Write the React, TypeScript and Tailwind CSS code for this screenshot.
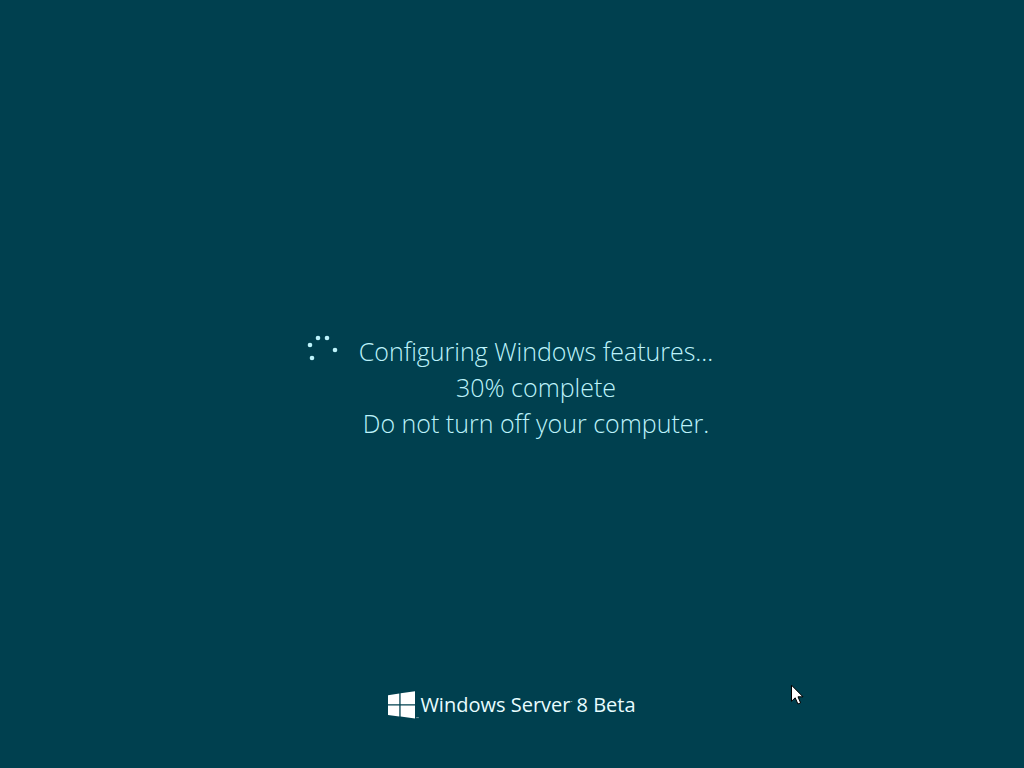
const DOTS = [
  { cx: 5, cy: 23 },
  { cx: 3, cy: 10 },
  { cx: 11, cy: 3 },
  { cx: 20, cy: 3 },
  { cx: 28, cy: 15 },
];

function Spinner() {
  return (
    <svg className="mt-0.5 h-8 w-8 shrink-0" viewBox="0 0 32 32" role="img" aria-label="Working">
      {DOTS.map((dot) => (
        <circle key={`${dot.cx}-${dot.cy}`} cx={dot.cx} cy={dot.cy} r="2.3" fill="#bdf3fb" />
      ))}
    </svg>
  );
}

function WindowsFlag() {
  return (
    <svg className="h-7 w-8 shrink-0" viewBox="0 0 32 28" fill="#fff" aria-hidden="true">
      <path d="M0 4.2 11.3 2.5V13.3H0z" />
      <path d="M12.6 2.3 27 .2V13.3H12.6z" />
      <path d="M0 14.6H11.3V25.5L0 23.9z" />
      <path d="M12.6 14.6H27V27.6L12.6 25.6z" />
      <path d="M28.2 26.2h2.6v.9h-2.6z" opacity="0.5" />
    </svg>
  );
}

function Cursor() {
  return (
    <svg className="absolute top-[684px] left-[791px] h-[21px] w-[13px]" viewBox="0 0 13 21" aria-hidden="true">
      <path
        d="M.5 1.2V17.3L4.2 13.8 6.9 20 9.6 18.9 7 12.8H12z"
        fill="#fff"
        stroke="#000"
        strokeWidth="1"
      />
    </svg>
  );
}

export default function App() {
  return (
    <div className="relative flex min-h-screen flex-col bg-[#00404f] font-['Open_Sans',sans-serif]">
      <main className="flex flex-1 items-center justify-center pt-[83px] pr-1">
        <div className="flex items-start gap-5">
          <Spinner />
          <div className="text-center text-[25px] leading-9 font-light text-[#bdf3fb]" role="status">
            <p>Configuring Windows features...</p>
            <p>30% complete</p>
            <p>Do not turn off your computer.</p>
          </div>
        </div>
      </main>
      <footer className="flex items-center justify-center pb-[49px]">
        <WindowsFlag />
        <p className="flex gap-1 text-[20px] leading-7 font-medium text-[#e9fdff]">
          <span>
            Windows Server<span className="align-super text-[8px] leading-none">·</span>
          </span>
          <span>8 Beta</span>
        </p>
      </footer>
      <Cursor />
    </div>
  );
}
